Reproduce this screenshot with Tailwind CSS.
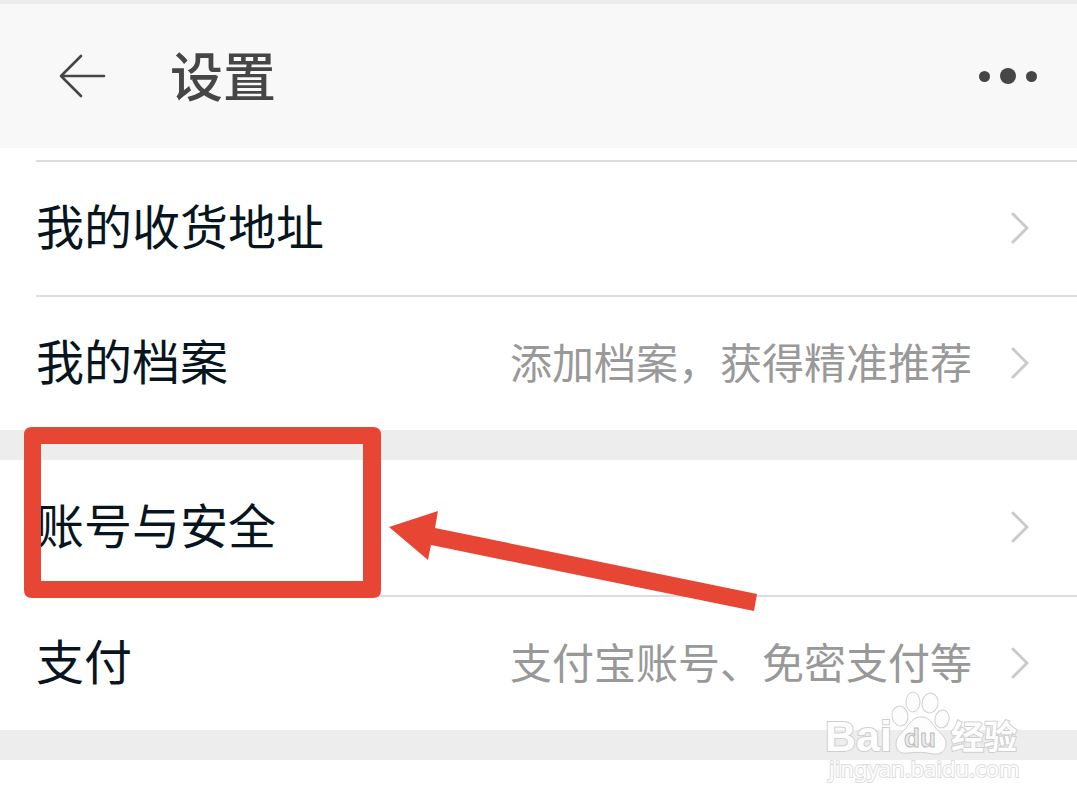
<!DOCTYPE html>
<html lang="zh-CN">

<head>
    <meta charset="UTF-8">
    <meta name="viewport" content="width=device-width, initial-scale=1.0">
    <title>设置</title>
    <script src="https://cdn.jsdelivr.net/npm/@tailwindcss/browser@4"></script>
</head>

<body class="relative h-screen overflow-hidden bg-white text-[#07161e] font-['Noto_Sans_CJK_SC',sans-serif]">
    <!-- 顶部栏 -->
    <header class="flex h-37 items-center border-t-4 border-[#ececec] bg-[#f8f8f8] pl-14 pr-10 text-[#464646]">
        <button type="button" aria-label="返回" class="shrink-0">
            <svg class="h-12 w-13" viewBox="0 0 52 48" fill="none" stroke="currentColor" stroke-width="2.6"
                stroke-linecap="round" stroke-linejoin="round">
                <path d="M25 4 5 24l20 20M5 24h43" />
            </svg>
        </button>
        <h1 class="ml-[62px] pb-1 text-[53px] font-medium leading-none">设置</h1>
        <button type="button" aria-label="更多" class="ml-auto flex items-center gap-[10px]">
            <span class="size-[11px] rounded-full bg-current"></span>
            <span class="size-4 rounded-full bg-current"></span>
            <span class="size-[11px] rounded-full bg-current"></span>
        </button>
    </header>

    <main>
        <section class="pt-3 pl-9">
            <a href="#address" class="flex h-[135px] items-center border-t-2 border-[#dcdcdc] pr-12 pb-[2px]">
                <span class="pb-2 text-5xl leading-none">我的收货地址</span>
                <svg class="ml-auto h-8 w-5" viewBox="0 0 20 32" fill="none" stroke="#cacaca" stroke-width="3"
                    stroke-linecap="round">
                    <path d="M4 2l14 14L4 30" />
                </svg>
            </a>
            <a href="#profile" class="flex h-[135px] items-center border-t-2 border-[#dcdcdc] pr-12 pb-[2px]">
                <span class="pb-2 text-5xl leading-none">我的档案</span>
                <span class="ml-auto mr-[37px] pb-1 text-[42px] leading-none text-[#999]">添加档案，获得精准推荐</span>
                <svg class="h-8 w-5" viewBox="0 0 20 32" fill="none" stroke="#cacaca" stroke-width="3"
                    stroke-linecap="round">
                    <path d="M4 2l14 14L4 30" />
                </svg>
            </a>
        </section>

        <section class="relative border-t-30 border-[#ededed] pl-9">
            <a href="#security" class="flex h-[135px] items-center pr-12 pb-[2px]">
                <span class="pb-2 text-5xl leading-none">账号与安全</span>
                <svg class="ml-auto h-8 w-5" viewBox="0 0 20 32" fill="none" stroke="#cacaca" stroke-width="3"
                    stroke-linecap="round">
                    <path d="M4 2l14 14L4 30" />
                </svg>
            </a>
            <a href="#pay" class="flex h-[135px] items-center border-t-2 border-[#dcdcdc] pr-12 pb-[2px]">
                <span class="pb-2 text-5xl leading-none">支付</span>
                <span class="ml-auto mr-[37px] pb-1 text-[42px] leading-none text-[#999]">支付宝账号、免密支付等</span>
                <svg class="h-8 w-5" viewBox="0 0 20 32" fill="none" stroke="#cacaca" stroke-width="3"
                    stroke-linecap="round">
                    <path d="M4 2l14 14L4 30" />
                </svg>
            </a>

            <!-- 标注：红框和箭头 -->
            <svg class="pointer-events-none absolute -top-10 left-5 h-[200px] w-[760px]" viewBox="0 0 760 200"
                fill="#e84635">
                <path fill-rule="evenodd"
                    d="M12 7h341q8 0 8 8v155q0 8-8 8H12q-8 0-8-8V15q0-8 8-8zM21 24v137h322V24z" />
                <path d="M369 107l49-16-3 17 322 66-3 17-323-66-3 15z" />
            </svg>
        </section>

        <section class="border-t-30 border-[#ededed] pl-9">
            <a href="#sound" class="flex h-[135px] items-center pr-12 pb-[2px]">
                <span class="text-5xl leading-none">音效与通知</span>
                <svg class="ml-auto h-8 w-5" viewBox="0 0 20 32" fill="none" stroke="#cacaca" stroke-width="3"
                    stroke-linecap="round">
                    <path d="M4 2l14 14L4 30" />
                </svg>
            </a>
        </section>
    </main>

    <!-- 水印 -->
    <svg class="pointer-events-none absolute bottom-4 right-12 h-[104px] w-[208px]" viewBox="0 0 208 104"
        stroke="#cfcfcf" fill="#fdfdfd" stroke-width="1" role="img" aria-label="百度经验">
        <ellipse cx="79" cy="29" rx="8" ry="10" transform="rotate(-10 79 29)" />
        <ellipse cx="92" cy="15" rx="7" ry="10" />
        <ellipse cx="109" cy="16" rx="8" ry="10" transform="rotate(10 109 16)" />
        <ellipse cx="121" cy="32" rx="7" ry="9" transform="rotate(12 121 32)" />
        <text x="4" y="64" font-size="43" paint-order="stroke" stroke-width="2"
            class="font-['Liberation_Sans',sans-serif] font-bold">Bai</text>
        <path d="M100 30c-8 0-11 6-15 11-5 6-10 9-10 16 0 8 6 10 12 9 9-1 17-1 25 1 7 1 13-3 13-10 0-8-6-10-11-17-4-6-7-10-14-10z" />
        <text x="83" y="60" font-size="26" fill="#ececec" stroke="#bdbdbd"
            class="font-['Liberation_Sans',sans-serif] font-bold">du</text>
        <text x="130" y="62" font-size="33" paint-order="stroke" stroke-width="2"
            class="font-['Noto_Sans_CJK_SC',sans-serif] font-bold">经验</text>
        <text x="8" y="90" font-size="22" paint-order="stroke" stroke-width="2" stroke="#dedede"
            class="font-['Noto_Sans',sans-serif]">jingyan.baidu.com</text>
    </svg>
</body>

</html>
